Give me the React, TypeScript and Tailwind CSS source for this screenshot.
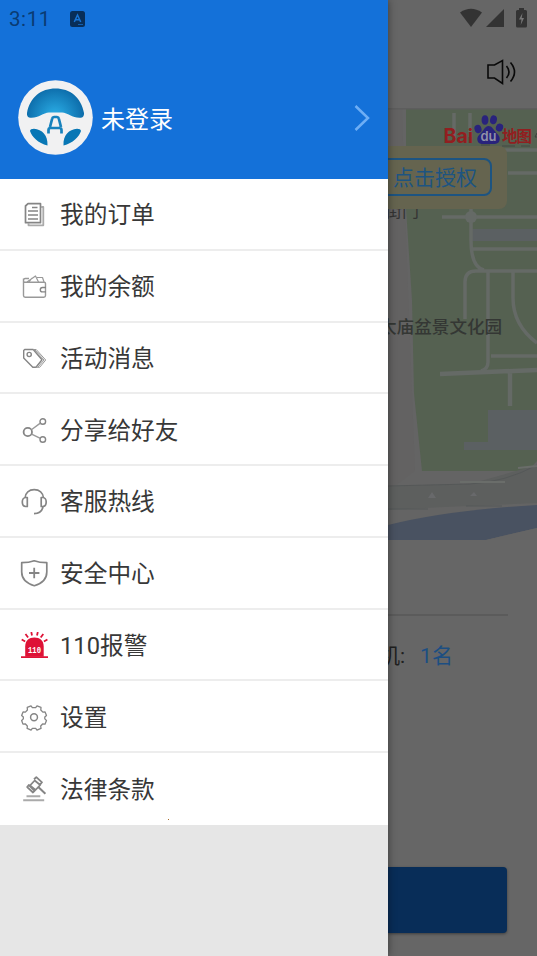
import type { ReactNode } from "react";

const Icon = ({ children }: { children: ReactNode }) => (
  <svg
    className="h-7 w-7 shrink-0"
    viewBox="0 0 28 28"
    fill="none"
    stroke="#858585"
    strokeWidth="1.4"
    strokeLinejoin="round"
  >
    {children}
  </svg>
);

const OrderIcon = () => (
  <Icon>
    <path d="M8 2.7h12.500v19H5.500V5z" strokeWidth="1.7" />
    <path d="M21 6h2.300v18.300H8.500V22" stroke="#aaa" strokeWidth="1.8" />
    <path d="M12 6.500h5.500M8 10h10M8 14h10M8 18h10" />
  </Icon>
);

const WalletIcon = () => (
  <Icon>
    <path d="M3.500 5.500v17q0 1.700 1.700 1.700h18.600q1.700 0 1.700-1.700V10.500q0-1.200-1.300-1.200H4.500q-1-.4-1-2 0-1.800 1.800-1.800H9" stroke="#999" />
    <path d="M7 9l8.500-6 3 6M12 5L9 9M17 4.500h5.500L24 9" stroke="#999" strokeWidth="1.200" />
    <path d="M26 14.500h-3.500a2.200 2.200 0 000 4.400H26" />
  </Icon>
);

const TagIcon = () => (
  <Icon>
    <path d="M3.700 5.500l1-1h8.500L22 14.700l-6 7.600h-3.200L3.700 13z" />
    <path d="M13.200 4.500h3L25.700 15l-6 7.300h-4M15 5l9 10-6 7" stroke="#999" strokeWidth="1" />
    <circle cx="9.200" cy="9.500" r="2.100" />
  </Icon>
);

const ShareIcon = () => (
  <Icon>
    <circle cx="7.800" cy="15" r="4.200" strokeWidth="1.800" />
    <circle cx="22.800" cy="4.500" r="2.800" />
    <circle cx="22.800" cy="22.500" r="2.800" />
    <path d="M11.400 12.700L20.300 6.100M11.600 17.100l8.800 4.300" stroke="#999" />
  </Icon>
);

const HeadsetIcon = () => (
  <Icon>
    <path d="M5 10C5.500 5 9 1.700 14.200 1.700S23 5 23.500 10" strokeWidth="1.700" />
    <path d="M7.300 9.500v9H5.700c-2 0-3.400-1.800-3.400-4.400s1.500-4.600 3.400-4.600zM21.200 9.500v9h1.600c2 0 3.400-1.800 3.400-4.400s-1.500-4.600-3.400-4.600z" strokeWidth="1.700" />
    <path d="M23 18.500c-.6 4-3.800 7-9 7.200" strokeWidth="1.700" />
  </Icon>
);

const ShieldIcon = () => (
  <Icon>
    <path d="M1.700 2.700C6.500 2.700 10.500 2.200 14.200.8 18 2.200 22 2.700 26.800 2.700V12c0 7-5 11.500-12.500 13.700C7 23.500 1.700 19 1.700 12z" strokeWidth="1.700" />
    <path d="M14.200 7.800v10.400M9 13h10.400" strokeWidth="1.800" />
  </Icon>
);

const AlarmIcon = () => (
  <Icon>
    <path d="M5.200 24.700V14.500C5.200 8.500 9 5.500 14.400 5.500s9.300 3 9.300 9v10.200z" fill="#de1236" stroke="none" />
    <path d="M1 25.200h27M1.700 7.500l3.500 2M5.500 2l2.600 3.500M11.300 0l.7 3.500M17.800 0l-.8 3.500M23.300 2l-2.600 3.500M27.400 7.500l-3.500 2" stroke="#de1236" strokeWidth="1.800" />
    <text x="14.500" y="20.500" textAnchor="middle" fill="#fff" stroke="none" fontSize="9.500" fontWeight="700" fontFamily="Liberation Mono, monospace" textLength="13" lengthAdjust="spacingAndGlyphs">
      110
    </text>
  </Icon>
);

const GearIcon = () => (
  <Icon>
    <g transform="translate(1 .2) scale(.93)">
      <path d="M10.800 1.800l1.400 1.800h3.600l1.400-1.800 4.300 1.700-.2 2.700 2.200 2.300 2.400-.2 1.500 3.800-1.800 1.700v2l1.800 1.700-1.600 4-2.600-.2-2 2.200.3 2.600-4.300 1.700-1.400-1.900h-3.600l-1.400 1.900-4.200-1.700.2-2.700-2.300-2.300-2.400.3L.700 17.500l1.800-1.700v-2L.700 12.100l1.500-3.800 2.500.2 2.200-2.300-.2-2.700z" />
      <circle cx="14" cy="14" r="3.700" strokeWidth="1.600" />
    </g>
  </Icon>
);

const LawIcon = () => (
  <Icon>
    <path d="M14.700 4.500l5.500 4.500-4.700 5-5.500-4.500zM14 3.200l2.300-2L22 6.300l-1.800 2.200M8.800 9l5.800 5.800-1.600 1.700-5.800-5.400z" strokeWidth="1.800" />
    <path d="M18 10.800l7.400 7" strokeWidth="2" />
    <path d="M6.500 20.300h13.800M3.200 24.200h21" stroke="#aaa" strokeWidth="1.900" />
  </Icon>
);

const menu = [
  { label: "我的订单", icon: <OrderIcon /> },
  { label: "我的余额", icon: <WalletIcon /> },
  { label: "活动消息", icon: <TagIcon /> },
  { label: "分享给好友", icon: <ShareIcon /> },
  { label: "客服热线", icon: <HeadsetIcon /> },
  { label: "安全中心", icon: <ShieldIcon /> },
  { label: "110报警", icon: <AlarmIcon /> },
  { label: "设置", icon: <GearIcon /> },
  { label: "法律条款", icon: <LawIcon /> },
];

const Avatar = () => (
  <svg className="h-[75px] w-[75px] shrink-0" viewBox="0 0 75 75">
    <defs>
      <radialGradient id="wheel" gradientUnits="userSpaceOnUse" cx="37" cy="36" r="34">
        <stop offset="0" stopColor="#2cb0e8" />
        <stop offset="1" stopColor="#07609f" />
      </radialGradient>
    </defs>
    <circle cx="37.500" cy="37.500" r="37.300" fill="#f1f1f2" />
    <path d="M9 33C12 17 23 8.500 37.500 8.500S63 17 66 33q.3 4-3 4.700c-8 .8-13-4.700-19-5.200H31c-6 .5-11 6-19 5.200Q8.500 37 9 33z" fill="url(#wheel)" />
    <path d="M12 51q.3-2.200 4-2.200C24 49.500 30 55 29.500 65.500 20 63 14 57 12 51zM63 51q-.3-2.200-4-2.200C51 49.500 45 55 45.500 65.500 55 63 61 57 63 51z" fill="#0877b5" />
    <path d="M30.500 53.500v-3.500q0-2 2-2h9q2 0 2 2v3.500M32 47l2.200-8.500q.3-1.500 1.800-1.500h3q1.500 0 1.800 1.500L43 47" fill="none" stroke="#1682bd" strokeWidth="2.700" />
  </svg>
);

const Drawer = () => (
  <aside className="relative z-10 flex h-full w-[388px] shrink-0 flex-col bg-[#e6e6e6] shadow-[0_0_8px_rgba(0,0,0,0.45)]">
    <header className="flex h-[179px] shrink-0 flex-col bg-[#1471d9]">
      <div className="flex h-[38px] items-center pl-[9px] text-[#0a3b72]">
        <span className="w-[61px] text-[20.500px] tracking-[0.6px]">3:11</span>
        <svg className="h-4 w-[15px]" viewBox="0 0 15 16">
          <rect width="15" height="16" rx="2.500" fill="#082e59" />
          <path d="M4.300 11l3.200-7 3.200 7M5.500 8.800h4" fill="none" stroke="#1874d5" strokeWidth="1.500" />
          <path d="M8 13.500h5" stroke="#1874d5" strokeWidth=".7" />
        </svg>
      </div>
      <div className="mt-[42px] flex items-center pr-[18px] pl-[18px]">
        <Avatar />
        <span className="ml-2 flex-1 pt-[4px] text-[24px] leading-8 text-white">未登录</span>
        <svg className="h-7 w-4" viewBox="0 0 16 28" fill="none" stroke="#6eaef5" strokeWidth="2.500">
          <path d="M1.500 2l12.500 12L1.500 26" />
        </svg>
      </div>
    </header>
    <nav className="flex h-[646px] shrink-0 flex-col bg-white">
      {menu.map((item) => (
        <div
          key={item.label}
          className="flex h-[71.78px] shrink-0 items-center gap-3 border-b-2 border-[#ededed] pt-[3px] pl-5 text-[23.7px] leading-8 text-[#383838] last:border-transparent"
        >
          {item.icon}
          <span>{item.label}</span>
        </div>
      ))}
    </nav>
    <i className="absolute top-[819px] left-[168px] h-px w-px bg-[#a86a28]" />
  </aside>
);

const BaiduLogo = () => (
  <svg className="absolute top-[5px] left-[54px] h-10 w-[95px]" viewBox="0 0 95 40">
    <g fontFamily="Inter, 'Noto Sans CJK SC', sans-serif" fontWeight="700">
      <text x="1.500" y="30" fontSize="20" fill="#921e20" textLength="29.500" lengthAdjust="spacingAndGlyphs">
        Bai
      </text>
      <text x="60" y="29" fontSize="15.500" fill="#921e20" textLength="30">
        地图
      </text>
      <g fill="#29237c">
        <ellipse cx="36" cy="16" rx="3.500" ry="4.200" transform="rotate(-18 36 16)" />
        <ellipse cx="43" cy="7" rx="3.400" ry="4.700" />
        <ellipse cx="51.500" cy="6.800" rx="3.400" ry="4.500" transform="rotate(12 51.500 6.800)" />
        <ellipse cx="57.500" cy="14.500" rx="3.600" ry="4" transform="rotate(20 57.500 14.500)" />
        <path d="M46.500 13c3.500 0 5 3.500 7.500 6.500 2.500 2.600 4.500 4.500 3.500 8-1 4-5.500 3.500-11 3.500s-10 .8-11-3.500c-.8-3.700 1.500-5.500 4-8s3.500-6.500 7-6.500z" />
      </g>
      <text x="38.500" y="27.500" fontSize="13" fontWeight="600" fill="#9292a8" textLength="16" lengthAdjust="spacingAndGlyphs">
        du
      </text>
    </g>
    <path d="M39 32h9M60 33h13M79 33h9" stroke="#454945" strokeWidth="1" />
    <path d="M95 20l-2 4h2" stroke="#3c403c" fill="none" />
  </svg>
);

const MapView = () => (
  <section className="relative h-[432px] shrink-0 overflow-hidden bg-[#646464]">
    <svg className="h-full w-full" viewBox="0 0 149 432">
      <path d="M18 0H149V353L140 363H34L26 285 24 192 18 100z" fill="#556151" />
      <path d="M0 0h14l3 100 7 185 3 78-27 20z" fill="#636262" />
      <path d="M83 121H149V133H83zM100 302h49v40H76v-8h24z" fill="#5b6062" />
      <path d="M0 378L82 376 149 357V395L56 399 0 402z" fill="#5d5f5e" />
      <path d="M0 378L82 376Q118 374 149 357M0 401h40M78 398h36" fill="none" stroke="#555858" />
      <g fill="none" stroke="#656a66" strokeWidth="3.500">
        <path d="M66 5v25M82 5v24M114 42h35M120 65h29M54 109h95M83 50v82q0 27 13 30M85 141h64M149 163H88q-11 0-11 11v37M100 163v91q0 7-7 9M125 163v27q0 27 24 45M103 248h46" />
        <path d="M52 266l97-4M122 264v34" strokeWidth="4.500" />
        <path d="M130 360l19-2M72 374h45" stroke="#6a6d6a" strokeWidth="2" />
      </g>
      <circle cx="83" cy="109" r="6" fill="#656a66" />
      <path d="M0 417Q60 402 149 397v23L98 432H0z" fill="#495261" />
      <path d="M98 432l51-12v12z" fill="#656565" />
      <path d="M40 390l4-6 4 6zM82 388l4-4 3 4z" fill="#68696b" />
      <path d="M0 0H149" stroke="#5d5d5d" strokeWidth="3" />
    </svg>
    <span className="absolute top-[91px] left-[-3px] text-[17px] whitespace-nowrap text-[#343434]">街门</span>
    <span className="absolute top-[206px] left-[-9px] text-[17.600px] font-medium whitespace-nowrap text-[#343734]">
      太庙盆景文化园
    </span>
    <div className="absolute top-[38px] left-[-20px] flex h-[63px] w-[139px] items-center rounded-lg bg-[#65644f] pb-[2px]">
      <button className="flex h-[38px] w-[124px] items-center justify-end rounded-[8px] border-2 border-[#1d5481] pt-[3px] pr-[13px] text-[21px] leading-8 text-[#1d5481]">
        点击授权
      </button>
    </div>
    <BaiduLogo />
  </section>
);

const StatusIcons = () => (
  <div className="flex h-[36px] items-center justify-end gap-[4px] pr-[10px]">
    <svg className="h-5 w-[22px]" viewBox="0 0 22 20" fill="#333">
      <path d="M0 4.500Q11-3 22 4.500L11 19z" />
    </svg>
    <svg className="h-5 w-[18px]" viewBox="0 0 18 20" fill="#333">
      <path d="M18 1v18H0z" />
    </svg>
    <svg className="ml-2 h-5 w-[11px]" viewBox="0 0 11 20">
      <path d="M3 0h5v2h1.500q1.500 0 1.500 1.500V18q0 1.500-1.500 1.500h-8Q0 19.500 0 18V3.500Q0 2 1.500 2H3z" fill="#333" />
      <path d="M6.500 5L3 11.500h2.500L4.700 17 8 10H5.700z" fill="#777" />
    </svg>
  </div>
);

export default function App() {
  return (
    <div className="flex h-[956px] w-[537px] overflow-hidden bg-[#666] font-[Roboto,'Noto_Sans_CJK_SC',sans-serif]">
      <Drawer />
      <main className="flex min-w-0 flex-1 flex-col">
        <StatusIcons />
        <div className="flex h-[72px] shrink-0 items-center justify-end pr-5">
          <svg className="h-7 w-[31px]" viewBox="0 0 31 28" fill="none" stroke="#090909" strokeWidth="1.600">
            <path d="M2 7h6.500L16.500 2.500v23L8.500 20H2z" />
            <path d="M20.500 8q5 6 0 12M24.500 4.500q8 9.500 0 19" />
          </svg>
        </div>
        <MapView />
        <div className="mr-[29px] h-[76px] shrink-0 border-b-2 border-[#5b5b5b]" />
        <div className="flex h-20 shrink-0 items-center gap-[15px] text-[21px] leading-8 whitespace-nowrap">
          <span className="-ml-[9px] text-[#202020]">机:</span>
          <span className="text-[#1c4e82]">1名</span>
        </div>
        <button className="mt-[171px] mr-[30px] h-[66px] shrink-0 rounded-r-[4px] bg-[#082d58] shadow-[0_1px_3px_rgba(0,0,0,0.4)]" />
      </main>
    </div>
  );
}
